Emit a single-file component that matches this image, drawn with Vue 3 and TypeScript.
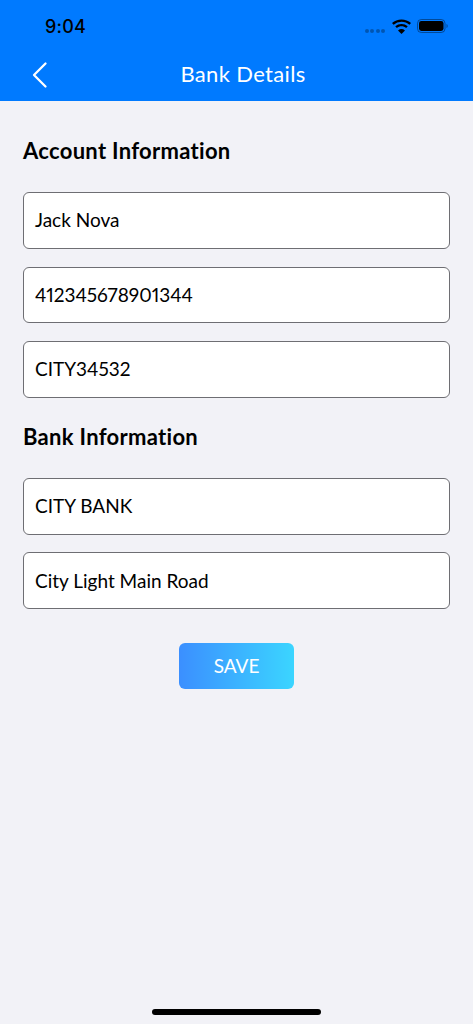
<script setup lang="ts">
const account: string[] = ['Jack Nova', '412345678901344', 'CITY34532']
const bank: string[] = ['CITY BANK', 'City Light Main Road']
</script>

<template>
  <div class="screen">
    <header class="top">
      <div class="status">
        <span class="time">9:04</span>
        <div class="indicators">
          <span class="dots"><i></i><i></i><i></i><i></i></span>
          <svg class="wifi" width="19" height="15" viewBox="1.3 0 16.4 14" preserveAspectRatio="none">
            <path d="M9.5 2.6c2.6 0 5 1 6.8 2.7l1.4-1.5A12 12 0 0 0 9.5.4 12 12 0 0 0 1.3 3.800l1.400 1.500A9.900 9.900 0 0 1 9.500 2.600z" fill="#000"/>
            <path d="M9.500 6.700c1.500 0 2.900.6 4 1.600l1.400-1.500a7.900 7.900 0 0 0-10.800 0l1.400 1.500c1.100-1 2.500-1.600 4-1.600z" fill="#000"/>
            <path d="M9.500 14l3-3.300a4.500 4.500 0 0 0-6 0z" fill="#000"/>
          </svg>
          <svg class="battery" width="31" height="14" viewBox="0 0 31 14">
            <rect x=".5" y=".5" width="27.500" height="13" rx="3.800" fill="none" stroke="#000" stroke-opacity=".4"/>
            <rect x="2" y="2" width="24.500" height="10" rx="2.400" fill="#000"/>
            <path d="M29.500 5v4c.8-.3 1.200-1.100 1.200-2s-.4-1.700-1.200-2z" fill="#000" fill-opacity=".4"/>
          </svg>
        </div>
      </div>
      <div class="nav">
        <svg class="back" width="18" height="28" viewBox="0 0 18 28">
          <path d="M15.500 2.500 4 14 15.500 25.500" fill="none" stroke="#fff" stroke-width="2.300" stroke-linecap="round" stroke-linejoin="round"/>
        </svg>
        <h1 class="title">Bank Details</h1>
      </div>
    </header>

    <main class="content">
      <h2 class="section">Account Information</h2>
      <div class="fields">
        <div v-for="v in account" :key="v" class="field">{{ v }}</div>
      </div>
      <h2 class="section second">Bank Information</h2>
      <div class="fields tight">
        <div v-for="v in bank" :key="v" class="field">{{ v }}</div>
      </div>
      <button class="save" type="button">SAVE</button>
    </main>

    <div class="home"></div>
  </div>
</template>

<style>
html, body { margin: 0; background: #f2f2f7; }
</style>

<style scoped>
.screen {
  width: 473px;
  height: 1024px;
  position: relative;
  overflow: hidden;
  background: #f2f2f7;
  font-family: Lato, "Noto Sans", sans-serif;
  font-variant-ligatures: none;
  font-variant-numeric: proportional-nums;
  color: #000;
}
.top {
  height: 101px;
  background: #007aff;
  box-sizing: border-box;
}
.status {
  height: 52px;
  display: flex;
  justify-content: space-between;
  align-items: center;
  padding: 0 25px 0 45px;
}
.time {
  font-family: Inter, sans-serif;
  font-size: 18px;
  font-weight: 500;
  letter-spacing: 0.2px;
}
.indicators { display: flex; align-items: center; }
.dots { display: flex; gap: 1.500px; margin-right: 7px; margin-top: 9px; }
.dots i { width: 4px; height: 4px; border-radius: 50%; background: #000; opacity: .3; }
.wifi { margin-right: 6px; }
.nav {
  height: 49px;
  position: relative;
  display: flex;
  align-items: center;
  justify-content: center;
}
.back { position: absolute; left: 30px; top: 9px; }
.title {
  margin: 0 0 6px 13px;
  font-size: 22px;
  font-weight: 400;
  letter-spacing: 0.35px;
  color: #fff;
}
.content {
  padding: 0 23px;
  display: flex;
  flex-direction: column;
}
.section {
  margin: 36.500px 0 29.500px;
  font-size: 22px;
  line-height: 25px;
  font-weight: 700;
  letter-spacing: 0.3px;
}
.section.second { margin: 26px 0 29.500px; }
.fields { display: flex; flex-direction: column; gap: 18px; }
.fields.tight { gap: 17.750px; }
.field {
  height: 56.500px;
  box-sizing: border-box;
  border: 1px solid #6e6e73;
  border-radius: 6px;
  background: #fff;
  padding: 0 11px 1px;
  display: flex;
  align-items: center;
  font-size: 19px;
}
.save {
  align-self: center;
  margin-top: 34.250px;
  width: 115px;
  height: 46px;
  border: 0;
  border-radius: 6px;
  background: linear-gradient(90deg, #3b8fff, #3bd5ff);
  color: #fff;
  font-family: inherit;
  font-size: 19px;
  padding: 0 0 2px;
}
.home {
  position: absolute;
  left: 152px;
  top: 1009px;
  width: 169px;
  height: 6px;
  border-radius: 3px;
  background: #000;
}
</style>
